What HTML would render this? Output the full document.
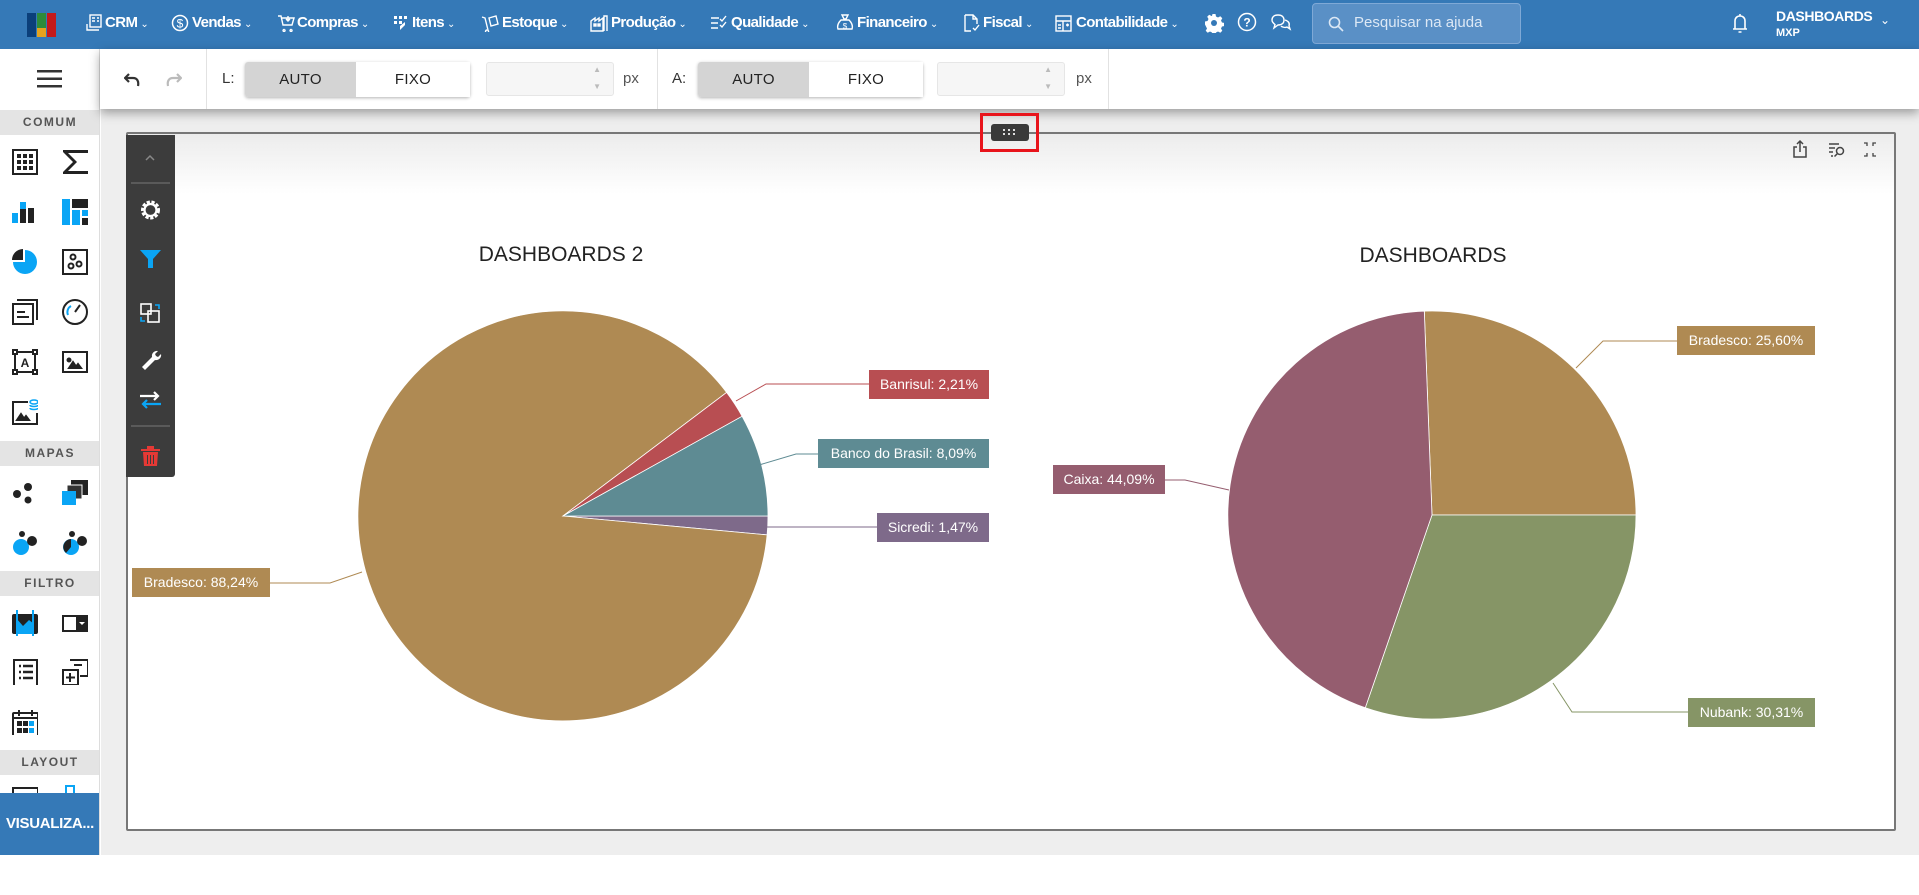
<!DOCTYPE html>
<html><head><meta charset="utf-8"><style>
*{box-sizing:border-box;margin:0;padding:0}
body{width:1919px;height:895px;position:relative;overflow:hidden;background:#fff;font-family:"Liberation Sans",sans-serif}
.a{position:absolute}
#top{left:0;top:0;width:1919px;height:49px;background:#3579b7;color:#fff}
.nav{position:absolute;top:14px;font-size:15px;font-weight:bold;letter-spacing:-0.6px;white-space:nowrap}
.nav small{font-size:10px;font-weight:normal;margin-left:3px}
.ic{position:absolute;top:14px}
#tb{left:100px;top:49px;width:1819px;height:60px;background:#fff;box-shadow:0 4px 10px rgba(0,0,0,.35)}
.sep{position:absolute;top:0;width:1px;height:60px;background:#e2e2e2}
.grp{position:absolute;top:13px;height:35px;border-radius:3px;box-shadow:0 1px 3px rgba(0,0,0,.3);display:flex;font-size:15px;color:#222;letter-spacing:.3px}
.grp div{display:flex;align-items:center;justify-content:center}
.inp{position:absolute;top:13px;height:34px;border:1px solid #e6e6e6;border-radius:3px;background:#f6f6f6}
.lbl{position:absolute;top:21px;font-size:15px;color:#333}
#side{left:0;top:49px;width:100px;height:806px;background:#fff;border-right:1px solid #ddd;overflow:hidden}
.sh{position:absolute;left:0;width:100px;height:25px;background:#e4e4e4;color:#555;font-size:12px;font-weight:bold;letter-spacing:1.5px;text-align:center;line-height:25px}
.si{position:absolute;width:26px;height:26px}
#content{left:101px;top:109px;width:1818px;height:746px;background:#eeeeee}
#frame{left:126px;top:132px;width:1770px;height:699px;border:2px solid #777;border-radius:2px;background:linear-gradient(#ececec,#fff 60px,#fff)}
.lab{position:absolute;height:29px;color:#fff;font-size:14px;line-height:29px;text-align:center;white-space:nowrap}
.ttl{position:absolute;font-size:21px;color:#222;transform:translateX(-50%);white-space:nowrap}
</style></head><body>
<div id="top" class="a">
 <svg class="a" style="left:27px;top:13px" width="30" height="24"><rect x="0" y="0" width="9" height="24" fill="#0b3f7a"/><rect x="10" y="0" width="9" height="15" fill="#2e8b3a"/><rect x="10" y="15" width="9" height="9" fill="#e5a21d"/><rect x="20" y="0" width="9" height="24" fill="#c41a1a"/></svg>
 <svg class="ic" style="left:86px" width="17" height="18" fill="none" stroke="#fff" stroke-width="1.4"><rect x="4" y="1" width="11" height="12"/><path d="M6 4h3M6 7h3M11 4h2M11 7h2M1 10v6h12"/></svg><div class="nav" style="left:105px">CRM<small>&#8964;</small></div>
 <svg class="ic" style="left:171px" width="18" height="18" fill="none" stroke="#fff" stroke-width="1.5"><circle cx="9" cy="9" r="7.5"/><text x="9" y="13.5" font-size="12" text-anchor="middle" fill="#fff" stroke="none" font-family="Liberation Sans">$</text></svg><div class="nav" style="left:192px">Vendas<small>&#8964;</small></div>
 <svg class="ic" style="left:277px" width="18" height="18" fill="none" stroke="#fff" stroke-width="1.4"><path d="M1 2h3l2 9h9l2-7H5M7 15.5a1 1 0 1 0 .1 0M14 15.5a1 1 0 1 0 .1 0M11 2v5M9 5l2 2 2-2"/></svg><div class="nav" style="left:297px">Compras<small>&#8964;</small></div>
 <svg class="ic" style="left:393px" width="16" height="18" fill="#fff"><rect x="1" y="2" width="3" height="3"/><rect x="6" y="2" width="3" height="3"/><rect x="1" y="7" width="3" height="3"/><rect x="6" y="7" width="3" height="3"/><rect x="11" y="2" width="3" height="3"/><path d="M7 12l5-4v3l-5 5z"/></svg><div class="nav" style="left:412px">Itens<small>&#8964;</small></div>
 <svg class="ic" style="left:481px" width="18" height="18" fill="none" stroke="#fff" stroke-width="1.4"><path d="M1 3l3 1 3 12M8 4l7-2 2 8-7 2zM6 16a1.5 1.5 0 1 0 .1 0"/></svg><div class="nav" style="left:502px">Estoque<small>&#8964;</small></div>
 <svg class="ic" style="left:590px" width="18" height="18" fill="none" stroke="#fff" stroke-width="1.4"><path d="M1 17V7l4-3v3l4-3v3l4-3v13zM14 17V2h3v15"/><rect x="4" y="10" width="2" height="2" fill="#fff"/><rect x="8" y="10" width="2" height="2" fill="#fff"/></svg><div class="nav" style="left:611px">Produção<small>&#8964;</small></div>
 <svg class="ic" style="left:710px" width="18" height="18" fill="none" stroke="#fff" stroke-width="1.4"><path d="M1 4h8M1 9h7M1 14h7M10 5l2 2 4-5M10 11l2 2 4-5"/></svg><div class="nav" style="left:731px">Qualidade<small>&#8964;</small></div>
 <svg class="ic" style="left:836px" width="18" height="18" fill="none" stroke="#fff" stroke-width="1.4"><path d="M6 1h6l-2 4h-2zM5 6h8c3 3 4 6 3 9H2c-1-3 0-6 3-9z"/><text x="9" y="15" font-size="8" text-anchor="middle" fill="#fff" stroke="none">$</text></svg><div class="nav" style="left:857px">Financeiro<small>&#8964;</small></div>
 <svg class="ic" style="left:963px" width="17" height="18" fill="none" stroke="#fff" stroke-width="1.4"><path d="M2 1h8l4 4v5M2 1v16h6M10 1v4h4M10 14l2 2 4-5"/></svg><div class="nav" style="left:983px">Fiscal<small>&#8964;</small></div>
 <svg class="ic" style="left:1055px" width="17" height="18" fill="none" stroke="#fff" stroke-width="1.4"><rect x="1" y="2" width="15" height="15"/><path d="M1 7h15M8 7v10M3 11h3M11 11h3M12.5 9.5v3M3 14h3"/></svg><div class="nav" style="left:1076px">Contabilidade<small>&#8964;</small></div>
 <svg class="ic" style="left:1204px;top:13px" width="20" height="20" viewBox="0 0 20 20"><path fill="#fff" d="M8.5 1h3l.5 2.5 2 1 2.3-1.3 2 2-1.3 2.3 1 2 2.5.5v3l-2.5.5-1 2 1.3 2.3-2 2-2.3-1.3-2 1-.5 2.5h-3l-.5-2.5-2-1-2.3 1.3-2-2 1.3-2.3-1-2L1 11.5v-3L3.5 8l1-2-1.3-2.3 2-2L7.5 3l.5-.1z"/><circle cx="10" cy="10" r="3" fill="#3579b7"/></svg>
 <svg class="ic" style="left:1237px;top:12px" width="20" height="20" fill="none" stroke="#fff" stroke-width="1.5"><circle cx="10" cy="10" r="8.5"/><text x="10" y="14.5" font-size="12" text-anchor="middle" fill="#fff" stroke="none" font-weight="bold">?</text></svg>
 <svg class="ic" style="left:1270px;top:13px" width="22" height="20" fill="none" stroke="#fff" stroke-width="1.4"><path d="M8 2c4 0 6 2 6 5s-2 5-6 5l-4 3 1-3.5C3 10 2 9 2 7c0-3 2-5 6-5zM15 7c3 1 5 3 4 6l1 3-3-2c-2 1-5 0-6-1"/></svg>
 <div class="a" style="left:1312px;top:3px;width:209px;height:41px;border:1px solid #7fa9d6;border-radius:4px;background:#5a90c6"></div>
 <svg class="a" style="left:1328px;top:16px" width="16" height="16" fill="none" stroke="#dce8f5" stroke-width="1.6"><circle cx="6.5" cy="6.5" r="5"/><path d="M10 10l5 5"/></svg>
 <div class="a" style="left:1354px;top:14px;font-size:15px;color:#dce8f5">Pesquisar na ajuda</div>
 <svg class="a" style="left:1731px;top:12px" width="18" height="24" fill="none" stroke="#fff" stroke-width="1.6"><path d="M4 17V9c0-3 2-5 5-5s5 2 5 5v8M2 17h14M9 2v2M7.5 20h3"/></svg>
 <div class="a" style="left:1776px;top:8px;font-size:14px;font-weight:bold;letter-spacing:-.4px">DASHBOARDS</div>
 <div class="a" style="left:1776px;top:27px;font-size:11px;font-weight:bold">MXP</div>
 <div class="a" style="left:1880px;top:13px;font-size:12px">&#8964;</div>
</div>

<div id="side" class="a">
 <svg class="a" style="left:37px;top:21px" width="25" height="18" fill="#333"><rect y="0" width="25" height="2.5"/><rect y="7.5" width="25" height="2.5"/><rect y="15" width="25" height="2.5"/></svg>
 <div class="sh" style="top:61px">COMUM</div>
 <svg class="si" style="left:12px;top:100px"><rect x="1" y="1" width="24" height="24" fill="none" stroke="#222" stroke-width="2"/><g fill="#222"><rect x="5" y="5" width="4" height="4"/><rect x="11" y="5" width="4" height="4"/><rect x="17" y="5" width="4" height="4"/><rect x="5" y="11" width="4" height="4"/><rect x="11" y="11" width="4" height="4"/><rect x="17" y="11" width="4" height="4"/><rect x="5" y="17" width="4" height="4"/><rect x="11" y="17" width="4" height="4"/><rect x="17" y="17" width="4" height="4"/></g></svg>
 <svg class="si" style="left:62px;top:100px"><path d="M1 1h26v3H6l9 9-9 9h21v3H1v-2l10-10L1 3z" fill="#222"/></svg>
 <svg class="si" style="left:12px;top:150px"><rect x="0" y="14" width="6" height="10" fill="#0aa5f5"/><rect x="8" y="3" width="6" height="21" fill="#0aa5f5"/><rect x="16" y="9" width="6" height="15" fill="#222"/><rect x="8" y="10" width="6" height="14" fill="#222"/></svg>
 <svg class="si" style="left:62px;top:150px"><rect x="0" y="0" width="8" height="26" fill="#0aa5f5"/><rect x="10" y="0" width="16" height="9" fill="#222"/><rect x="10" y="11" width="8" height="15" fill="#0aa5f5"/><rect x="20" y="11" width="6" height="6" fill="#0aa5f5"/><rect x="20" y="19" width="6" height="7" fill="#222"/></svg>
 <svg class="si" style="left:12px;top:200px"><path d="M13 13V1a12 12 0 1 1-12 12z" fill="#0aa5f5"/><path d="M11 11V0A11 11 0 0 0 0 11z" fill="#222"/></svg>
 <svg class="si" style="left:62px;top:200px" fill="none" stroke="#222" stroke-width="2"><rect x="1" y="1" width="24" height="24"/><circle cx="9" cy="17" r="2.5"/><circle cx="17" cy="15" r="2.5"/><circle cx="11" cy="8" r="2.5"/></svg>
 <svg class="si" style="left:12px;top:250px" fill="none" stroke="#222" stroke-width="2"><rect x="1" y="5" width="20" height="20"/><path d="M5 1h20v20"/><path d="M5 13h8M5 18h12"/></svg>
 <svg class="si" style="left:62px;top:250px" fill="none" stroke="#222" stroke-width="2"><circle cx="13" cy="13" r="12"/><path d="M13 13l5-7"/><path d="M6 16a7 7 0 0 1 3-9" stroke="#0aa5f5"/></svg>
 <svg class="si" style="left:12px;top:300px" fill="none" stroke="#222" stroke-width="2"><rect x="3" y="3" width="20" height="20"/><rect x="1" y="1" width="4" height="4" fill="#fff"/><rect x="21" y="1" width="4" height="4" fill="#fff"/><rect x="1" y="21" width="4" height="4" fill="#fff"/><rect x="21" y="21" width="4" height="4" fill="#fff"/><text x="13" y="18" font-size="12" text-anchor="middle" fill="#222" stroke="none" font-weight="bold">A</text></svg>
 <svg class="si" style="left:62px;top:300px" fill="none" stroke="#222" stroke-width="2"><rect x="1" y="3" width="24" height="20"/><path d="M7 19l4-6 4 6zM13 19l3-4 3 4z" fill="#222"/><circle cx="7" cy="11" r="1.5" fill="#222"/></svg>
 <svg class="si" style="left:12px;top:350px" fill="none" stroke="#222" stroke-width="2"><path d="M16 3H1v22h24V14"/><path d="M5 21l4-6 4 6zM11 21l3-4 3 4z" fill="#222"/><ellipse cx="22" cy="3" rx="4" ry="2" stroke="#0aa5f5" stroke-width="1.5"/><path d="M18 6c0 2 8 2 8 0M18 9c0 2 8 2 8 0" stroke="#0aa5f5" stroke-width="1.5"/></svg>
 <div class="sh" style="top:392px">MAPAS</div>
 <svg class="si" style="left:12px;top:431px"><circle cx="5" cy="14" r="4" fill="#222"/><circle cx="16" cy="7" r="4" fill="#222"/><circle cx="16" cy="20" r="3.5" fill="#222"/></svg>
 <svg class="si" style="left:62px;top:431px"><rect x="9" y="0" width="17" height="15" fill="#222"/><rect x="5" y="5" width="15" height="14" fill="#333" stroke="#fff"/><rect x="0" y="11" width="14" height="14" fill="#0aa5f5"/></svg>
 <svg class="si" style="left:12px;top:481px"><circle cx="9" cy="17" r="8" fill="#0aa5f5"/><circle cx="20" cy="11" r="5" fill="#222"/><circle cx="10" cy="4" r="3" fill="#222"/></svg>
 <svg class="si" style="left:62px;top:481px"><circle cx="9" cy="17" r="8" fill="#0aa5f5"/><path d="M9 17V9a8 8 0 0 0-5 14z" fill="#222"/><circle cx="20" cy="11" r="5" fill="#222"/><circle cx="10" cy="4" r="3" fill="#222"/></svg>
 <div class="sh" style="top:522px">FILTRO</div>
 <svg class="si" style="left:12px;top:561px"><rect x="0" y="4" width="26" height="20" rx="2" fill="#222"/><path d="M4 8l7 8 6-6 5 4v10H4z" fill="#0aa5f5"/><rect x="4" y="0" width="2" height="27" fill="#0aa5f5"/><rect x="20" y="0" width="2" height="27" fill="#0aa5f5"/></svg>
 <svg class="si" style="left:62px;top:561px" fill="none" stroke="#222" stroke-width="2"><rect x="1" y="6" width="26" height="15"/><rect x="15" y="8" width="10" height="11" fill="#222"/><path d="M17 12h6l-3 3z" fill="#fff" stroke="none"/></svg>
 <svg class="si" style="left:12px;top:610px" fill="none" stroke="#222" stroke-width="2"><rect x="2" y="1" width="23" height="26"/><path d="M7 7h2M11 7h10M7 13h2M11 13h10M7 19h2M11 19h10" stroke-width="2.5"/></svg>
 <svg class="si" style="left:62px;top:610px" fill="none" stroke="#222" stroke-width="2"><rect x="1" y="11" width="15" height="15"/><path d="M8 1h18v16h-8M12 6h8"/><path d="M8 14v9M4 18.5h9"/></svg>
 <svg class="si" style="left:12px;top:660px" fill="none" stroke="#222" stroke-width="2"><rect x="1" y="4" width="25" height="23" rx="1"/><path d="M1 9h25M7 1v6M20 1v6"/><g stroke="none" fill="#222"><rect x="5" y="12" width="5" height="5"/><rect x="11" y="12" width="5" height="5"/><rect x="5" y="19" width="5" height="5"/><rect x="11" y="19" width="5" height="5"/></g><g stroke="none" fill="#0aa5f5"><rect x="17" y="12" width="5" height="5"/><rect x="17" y="19" width="5" height="5"/></g></svg>
 <div class="sh" style="top:701px">LAYOUT</div>
 <svg class="si" style="left:12px;top:738px" fill="none" stroke="#222" stroke-width="2"><rect x="1" y="1" width="25" height="20"/></svg>
 <svg class="si" style="left:62px;top:736px" fill="none" stroke="#0aa5f5" stroke-width="2"><rect x="4" y="1" width="8" height="20"/></svg>
 <div class="a" style="left:0;top:744px;width:100px;height:62px;background:#3579b7;color:#fff;font-size:15px;font-weight:bold;line-height:62px;text-align:center;letter-spacing:-.3px">VISUALIZA...</div>
</div>

<div id="content" class="a"></div>
<div id="frame" class="a"></div>

<div id="tb" class="a">
 <svg class="a" style="left:24px;top:22px" width="18" height="16" fill="none" stroke="#333" stroke-width="2.2"><path d="M5 3L1 7l4 4"/><path d="M1 7h8c4 0 6 3 5 8"/></svg>
 <svg class="a" style="left:64px;top:22px" width="18" height="16" fill="none" stroke="#bbb" stroke-width="2.2"><path d="M13 3l4 4-4 4"/><path d="M17 7H9C5 7 3 10 4 15"/></svg>
 <div class="sep" style="left:106px"></div>
 <div class="lbl" style="left:122px">L:</div>
 <div class="grp" style="left:145px;width:225px"><div style="width:111px;background:#d4d4d4;border-radius:3px 0 0 3px">AUTO</div><div style="width:114px;background:#fff">FIXO</div></div>
 <div class="inp" style="left:386px;width:128px"><span class="a" style="right:12px;top:2px;font-size:8px;color:#bbb">&#9650;</span><span class="a" style="right:12px;top:19px;font-size:8px;color:#bbb">&#9660;</span></div>
 <div class="lbl" style="left:523px;color:#555">px</div>
 <div class="sep" style="left:557px"></div>
 <div class="lbl" style="left:572px">A:</div>
 <div class="grp" style="left:598px;width:225px"><div style="width:111px;background:#d4d4d4;border-radius:3px 0 0 3px">AUTO</div><div style="width:114px;background:#fff">FIXO</div></div>
 <div class="inp" style="left:837px;width:128px"><span class="a" style="right:12px;top:2px;font-size:8px;color:#bbb">&#9650;</span><span class="a" style="right:12px;top:19px;font-size:8px;color:#bbb">&#9660;</span></div>
 <div class="lbl" style="left:976px;color:#555">px</div>
 <div class="sep" style="left:1008px"></div>
</div>

<!-- drag handle -->
<div class="a" style="left:980px;top:113px;width:59px;height:39px;border:3px solid #e8141b"></div>
<div class="a" style="left:991px;top:124px;width:38px;height:17px;background:#3a3a3a;border-radius:3px"></div>
<svg class="a" style="left:1003px;top:128px" width="14" height="9" fill="#ddd"><rect x="0" y="1" width="2" height="2"/><rect x="5" y="1" width="2" height="2"/><rect x="10" y="1" width="2" height="2"/><rect x="0" y="5" width="2" height="2"/><rect x="5" y="5" width="2" height="2"/><rect x="10" y="5" width="2" height="2"/></svg>

<!-- floating toolbar -->
<div class="a" style="left:126px;top:135px;width:49px;height:342px;background:#3c3c3c;border-radius:0 0 3px 0"></div>
<svg class="a" style="left:126px;top:135px" width="49" height="342">
 <path d="M20 25l4-4 4 4" fill="none" stroke="#888" stroke-width="1.5"/>
 <path d="M5 48h39M5 291h39" stroke="#777"/>
 <g transform="translate(24.5,75)"><circle r="8" fill="none" stroke="#fff" stroke-width="3" stroke-dasharray="3.2 1.6"/><circle r="6" fill="none" stroke="#fff" stroke-width="2.2"/></g>
 <path d="M14 115h21l-8 9v9h-5v-9z" fill="#0aa5f5"/>
 <g transform="translate(0,12)">
 <g fill="none" stroke="#fff" stroke-width="1.6"><rect x="15" y="157" width="10" height="10"/><rect x="22" y="164" width="11" height="11"/></g>
 <path d="M29 158l4 0 0 4M15 170v4h4" stroke="#0aa5f5" stroke-width="1.6" fill="none"/>
 </g>
 <g transform="translate(0,20)"><path d="M16 212l10-10a5 5 0 0 1 6-6l-3 3 1 2 2 1 3-3a5 5 0 0 1-6 6l-10 10z" fill="#fff"/></g>
 <g transform="translate(0,25)">
 <path d="M14 236h18M28 232l4 4-4 4" stroke="#fff" stroke-width="2.2" fill="none"/>
 <path d="M35 244H17M21 240l-4 4 4 4" stroke="#0aa5f5" stroke-width="2.2" fill="none"/>
 </g>
 <g transform="translate(0,10)">
 <path d="M17 307h15l-1 14H18z M15 304h19v2H15z M21 301h7v3h-7z" fill="#e53935"/>
 <path d="M21.5 310v9M24.5 310v9M27.5 310v9" stroke="#3c3c3c" stroke-width="1"/>
 </g>
</svg>

<!-- top-right frame icons -->
<svg class="a" style="left:1791px;top:138px" width="100" height="22" fill="none" stroke="#444" stroke-width="1.5">
 <path d="M6 9H3v10h12V9h-3M9 14V3M6 6l3-3 3 3"/>
 <path d="M38 6h10M38 10h6M38 14h4M40 18h2"/><circle cx="49" cy="13" r="3.5"/><path d="M46.5 15.5l-3 3"/>
 <path d="M73 5h3v3M85 5h-3v3M73 18h3v-3M85 18h-3v-3" stroke-width="1.3"/>
</svg>

<!-- charts -->
<div class="ttl" style="left:561px;top:243px">DASHBOARDS 2</div>
<div class="ttl" style="left:1433px;top:244px">DASHBOARDS</div>
<svg class="a" style="left:0;top:0" width="1919" height="895">
 <g stroke="#fff" stroke-width="0.8">
  <path d="M563 516L768 516A205 205 0 0 1 767.1 534.9Z" fill="#7e6a8a"/>
  <path d="M563 516L767.1 534.9A205 205 0 1 1 726.6 392.4Z" fill="#af8a53"/>
  <path d="M563 516L726.6 392.4A205 205 0 0 1 742.1 416.3Z" fill="#b84e52"/>
  <path d="M563 516L742.1 416.3A205 205 0 0 1 768 516Z" fill="#5e8b93"/>
  <path d="M1432 515L1424.3 311.1A204 204 0 0 1 1636 515Z" fill="#af8a53"/>
  <path d="M1432 515L1636 515A204 204 0 0 1 1365.3 707.8Z" fill="#869566"/>
  <path d="M1432 515L1365.3 707.8A204 204 0 0 1 1424.3 311.1Z" fill="#955d6f"/>
 </g>
 <g fill="none" stroke-width="1">
  <path d="M736 401L766 384H869" stroke="#b84e52"/>
  <path d="M759 465L796 454H818" stroke="#5e8b93"/>
  <path d="M766 527H877" stroke="#7e6a8a"/>
  <path d="M362 572L330 583H270" stroke="#af8a53"/>
  <path d="M1576 368L1603 341H1677" stroke="#af8a53"/>
  <path d="M1229 490L1185 480H1165" stroke="#955d6f"/>
  <path d="M1553 683L1572 712H1688" stroke="#869566"/>
 </g>
</svg>
<div class="lab" style="left:869px;top:370px;width:120px;background:#b84e52">Banrisul: 2,21%</div>
<div class="lab" style="left:818px;top:439px;width:171px;background:#5e8b93">Banco do Brasil: 8,09%</div>
<div class="lab" style="left:877px;top:513px;width:112px;background:#7e6a8a">Sicredi: 1,47%</div>
<div class="lab" style="left:132px;top:568px;width:138px;background:#af8a53">Bradesco: 88,24%</div>
<div class="lab" style="left:1677px;top:326px;width:138px;background:#af8a53">Bradesco: 25,60%</div>
<div class="lab" style="left:1053px;top:465px;width:112px;background:#955d6f">Caixa: 44,09%</div>
<div class="lab" style="left:1688px;top:698px;width:127px;background:#869566">Nubank: 30,31%</div>
</body></html>
